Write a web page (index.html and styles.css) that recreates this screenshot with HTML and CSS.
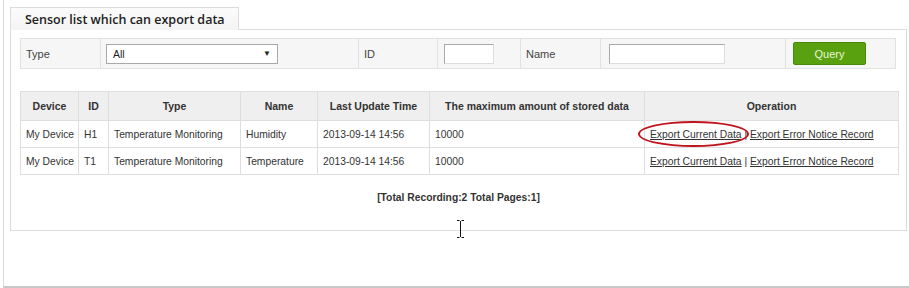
FILE: index.html
```html
<!DOCTYPE html>
<html>
	<head>
		<meta charset="UTF-8">
		<title>Sensor list</title>
		<link rel="stylesheet" href="styles.css">
	</head>
	<body>
		<div class="frame">
			<div class="tab-bar">
				<span class="tab">Sensor list which can export data</span>
			</div>
			<div class="panel">
				<table class="filter">
					<colgroup>
						<col style="width: 80px">
						<col style="width: 258px">
						<col style="width: 79px">
						<col style="width: 83px">
						<col style="width: 80px">
						<col style="width: 185px">
						<col style="width: 110px">
					</colgroup>
					<tr>
						<td class="f-label">Type</td>
						<td class="f-field">
							<div class="select"><span>All</span><span class="arrow">▼</span></div>
						</td>
						<td class="f-label">ID</td>
						<td class="f-field"><input type="text" class="in-id"></td>
						<td class="f-label">Name</td>
						<td class="f-field"><input type="text" class="in-name"></td>
						<td class="f-btn"><button class="query">Query</button></td>
					</tr>
				</table>
				<table class="list">
					<colgroup>
						<col style="width: 58px">
						<col style="width: 30px">
						<col style="width: 132px">
						<col style="width: 77px">
						<col style="width: 112px">
						<col style="width: 215px">
						<col style="width: 254px">
					</colgroup>
					<tr>
						<th>Device</th>
						<th>ID</th>
						<th>Type</th>
						<th>Name</th>
						<th>Last Update Time</th>
						<th>The maximum amount of stored data</th>
						<th>Operation</th>
					</tr>
					<tr>
						<td>My Device</td>
						<td>H1</td>
						<td>Temperature Monitoring</td>
						<td>Humidity</td>
						<td>2013-09-14 14:56</td>
						<td>10000</td>
						<td class="ops">
							<span class="mark"><a href="#">Export Current Data</a><span class="ring"></span></span>
							|
							<a href="#">Export Error Notice Record</a>
						</td>
					</tr>
					<tr>
						<td>My Device</td>
						<td>T1</td>
						<td>Temperature Monitoring</td>
						<td>Temperature</td>
						<td>2013-09-14 14:56</td>
						<td>10000</td>
						<td class="ops">
							<a href="#">Export Current Data</a>
							|
							<a href="#">Export Error Notice Record</a>
						</td>
					</tr>
				</table>
				<div class="pager">[Total Recording:2 Total Pages:1]</div>
				<svg class="cursor" width="9" height="18" viewBox="0 0 9 18">
					<path d="M1 0.5h2.5M5.5 0.5h2.5M4.5 1v16M1 17.5h2.5M5.5 17.5h2.5" stroke="#111" stroke-width="1" fill="none"/>
				</svg>
			</div>
		</div>
	</body>
</html>
```
FILE: styles.css
```css
body {
	margin: 0;
	background: #fff;
	font: 10.3px "Liberation Sans", Arial, sans-serif;
	color: #333;
}
.frame {
	margin-left: 3px;
	height: 288px;
	border-left: 1px solid #d8d8d8;
	border-bottom: 2px solid #c8c8c8;
	padding: 7px 2px 0 6px;
	box-sizing: border-box;
}
.tab-bar {
	display: flex;
	border-bottom: 1px solid #dcdcdc;
	height: 22px;
}
.tab {
	width: 229px;
	box-sizing: border-box;
	padding: 3px 0 0 14px;
	border: 1px solid #dcdcdc;
	border-bottom: none;
	background: linear-gradient(#fbfbfb, #f4f4f4);
	font: 600 12.5px "Open Sans", sans-serif;
	color: #222;
	height: 23px;
	margin-bottom: -1px;
}
.panel {
	position: relative;
	border: 1px solid #dcdcdc;
	border-top: none;
	height: 192px;
	padding: 8px 9px 0 9px;
}
.filter {
	table-layout: fixed;
	border-collapse: collapse;
	width: 875px;
	background: #f6f6f6;
}
.filter td {
	border: 1px solid #e2e2e2;
	height: 29px;
	padding: 0;
	vertical-align: middle;
}
.f-label {
	padding-left: 5px !important;
	font-size: 11px;
	color: #444;
}
.select {
	margin-left: 5px;
	width: 172px;
	height: 20px;
	box-sizing: border-box;
	border: 1px solid #a9a9a9;
	background: #fff;
	display: flex;
	align-items: center;
	justify-content: space-between;
	padding: 0 6px;
	font-size: 10.5px;
	color: #222;
}
.arrow { font-size: 8px; }
input[type="text"] {
	height: 20px;
	box-sizing: border-box;
	border: 1px solid #a9a9a9;
	border-right-color: #ddd;
	border-bottom-color: #ddd;
	background: #fff;
	padding: 0;
}
.in-id   { width: 50px; margin: 0 0 0 6px; }
.in-name { width: 116px; margin: 0 0 0 8px; }
.f-btn { padding-left: 7px !important; }
.query {
	width: 73px;
	height: 23px;
	border: 1px solid #4a8a0a;
	border-radius: 2px;
	background: #5aa10f;
	color: #e8f6d8;
	font: 11px "Liberation Sans", Arial, sans-serif;
	padding: 0;
}
.list {
	table-layout: fixed;
	margin-top: 22px;
	border-collapse: collapse;
	width: 878px;
}
.list th, .list td {
	border: 1px solid #dedede;
	padding: 0 5px;
	white-space: nowrap;
}
.list th {
	background: #efefef;
	height: 28px;
	font: bold 10.5px "Liberation Sans", Arial, sans-serif;
	color: #333;
	text-align: center;
}
.list td {
	height: 26px;
	color: #333;
}
.ops a { color: #333; }
.mark { position: relative; }
.ring {
	position: absolute;
	left: -12px;
	top: -8px;
	width: 107px;
	height: 22px;
	border: 2px solid #c0141c;
	border-radius: 50%;
	pointer-events: none;
}
.pager {
	margin-top: 17px;
	text-align: center;
	font: bold 10.3px "Liberation Sans", Arial, sans-serif;
	color: #333;
}
.cursor {
	position: absolute;
	left: 445px;
	top: 190px;
}
```
